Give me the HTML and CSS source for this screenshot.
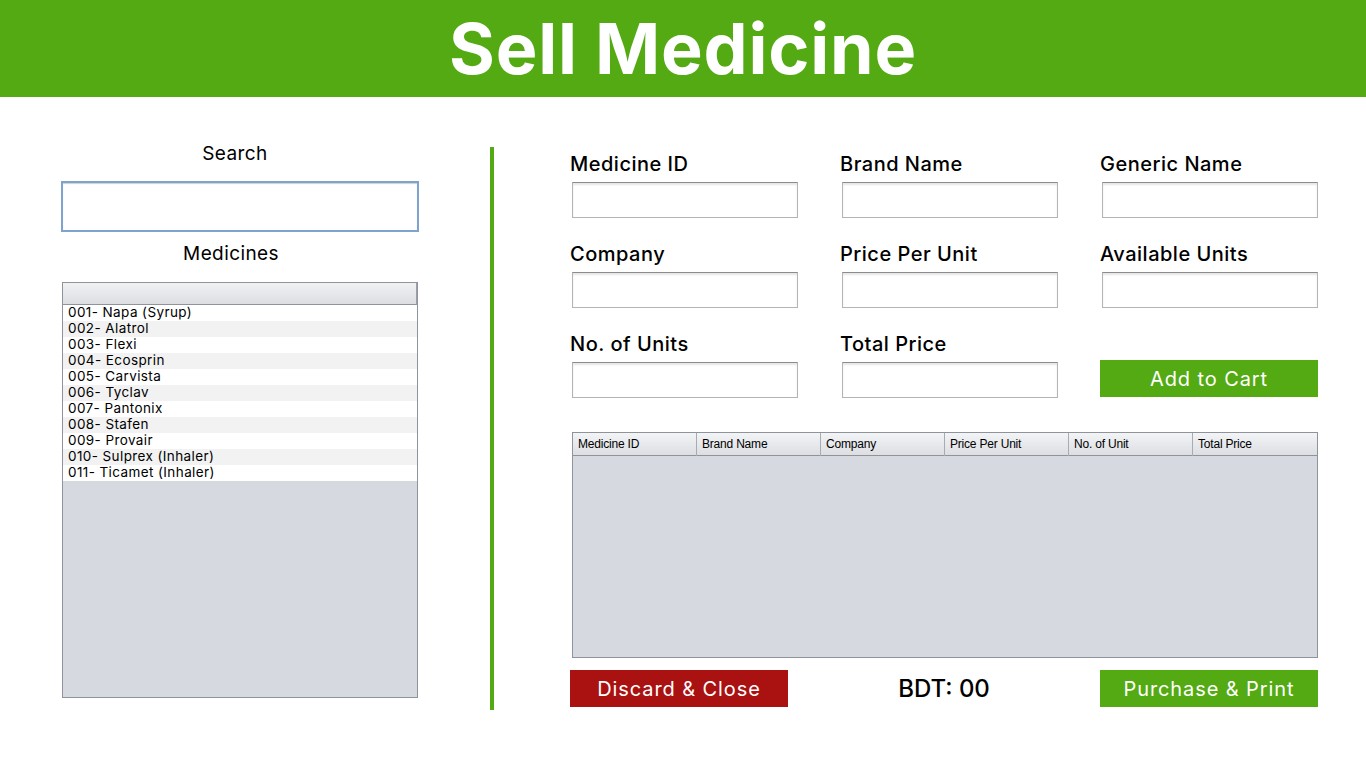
FILE: index.html
```html
<!DOCTYPE html>
<html lang="en">
<head>
    <meta charset="UTF-8">
    <meta name="viewport" content="width=device-width, initial-scale=1.0">
    <title>Sell Medicine</title>
    <link rel="stylesheet" href="styles.css">
</head>
<body>
    <header class="topbar">
        <h1>Sell Medicine</h1>
    </header>

    <main class="page">
        <section class="left-col">
            <div class="side-title search-title">Search</div>
            <input type="text" class="search-box">
            <div class="side-title medicines-title">Medicines</div>
            <div class="med-list">
                <div class="list-head"></div>
                <div class="list-row">001- Napa (Syrup)</div>
                <div class="list-row">002- Alatrol</div>
                <div class="list-row">003- Flexi</div>
                <div class="list-row">004- Ecosprin</div>
                <div class="list-row">005- Carvista</div>
                <div class="list-row">006- Tyclav</div>
                <div class="list-row">007- Pantonix</div>
                <div class="list-row">008- Stafen</div>
                <div class="list-row">009- Provair</div>
                <div class="list-row">010- Sulprex (Inhaler)</div>
                <div class="list-row">011- Ticamet (Inhaler)</div>
            </div>
        </section>

        <div class="divider"></div>

        <section class="right-col">
            <div class="fields">
                <div class="field">
                    <label for="med_id">Medicine ID</label>
                    <input type="text" id="med_id" class="wide">
                </div>
                <div class="field">
                    <label for="brand">Brand Name</label>
                    <input type="text" id="brand">
                </div>
                <div class="field">
                    <label for="generic">Generic Name</label>
                    <input type="text" id="generic">
                </div>

                <div class="field">
                    <label for="company">Company</label>
                    <input type="text" id="company" class="wide">
                </div>
                <div class="field">
                    <label for="ppu">Price Per Unit</label>
                    <input type="text" id="ppu">
                </div>
                <div class="field">
                    <label for="avail">Available Units</label>
                    <input type="text" id="avail">
                </div>

                <div class="field">
                    <label for="units">No. of Units</label>
                    <input type="text" id="units" class="wide">
                </div>
                <div class="field">
                    <label for="total">Total Price</label>
                    <input type="text" id="total">
                </div>
                <div class="field field-btn">
                    <button class="btn green">Add to Cart</button>
                </div>
            </div>

            <div class="cart">
                <div class="cart-head">
                    <div>Medicine ID</div>
                    <div>Brand Name</div>
                    <div>Company</div>
                    <div>Price Per Unit</div>
                    <div>No. of Unit</div>
                    <div>Total Price</div>
                </div>
            </div>

            <div class="bottom-bar">
                <button class="btn red">Discard &amp; Close</button>
                <div class="total-text">BDT: 00</div>
                <button class="btn green">Purchase &amp; Print</button>
            </div>
        </section>
    </main>
</body>
</html>
```

FILE: styles.css
```css
body {
    margin: 0;
    font-family: "Inter", "Open Sans", sans-serif;
    background: #fff;
    color: #000;
}
.topbar {
    height: 97px;
    background: #54aa12;
    display: flex;
    justify-content: center;
    align-items: center;
}
.topbar h1 {
    margin: 0;
    color: #fff;
    font-size: 70px;
    font-weight: 700;
    letter-spacing: 0.8px;
    line-height: 97px;
}
.page {
    display: flex;
    padding: 45px 0 0 61px;
}
.left-col {
    width: 358px;
    display: flex;
    flex-direction: column;
}
.side-title {
    font-size: 19px;
    line-height: 24px;
    text-align: center;
    font-weight: 400;
    letter-spacing: 0.4px;
}
.search-title {
    margin-right: 10px;
}
.search-box {
    margin-top: 15px;
    height: 51px;
    box-sizing: border-box;
    border: 2px solid #7ea3cf;
    outline: none;
    box-shadow: inset 0 1px 1px #d0d0d0;
}
.medicines-title {
    margin-top: 10px;
    margin-right: 18px;
}
.med-list {
    margin: 16px 0 0 1px;
    width: 356px;
    height: 416px;
    box-sizing: border-box;
    border: 1px solid #8e939c;
    background: #d6d9e0;
}
.list-head {
    height: 21px;
    border-bottom: 1px solid #8e939c;
    border-right: 1px solid #9aa0a8;
    background: linear-gradient(#f0f1f3, #dcdee2);
}
.list-row {
    height: 16px;
    line-height: 15px;
    font-size: 13.5px;
    letter-spacing: 0.4px;
    padding-left: 5px;
    background: #fff;
}
.list-row:nth-child(odd) {
    background: #f2f2f2;
}
.divider {
    width: 4px;
    height: 563px;
    margin: 5px 0 0 71px;
    background: #54aa12;
}
.right-col {
    margin-left: 76px;
    width: 748px;
    padding-top: 10px;
}
.fields {
    display: grid;
    grid-template-columns: 270px 260px 218px;
    row-gap: 24px;
}
.field {
    display: flex;
    flex-direction: column;
}
.field label {
    font-size: 20px;
    font-weight: 500;
    line-height: 24px;
    letter-spacing: 0.5px;
    margin-bottom: 6px;
}
.field input {
    margin-left: 2px;
    width: 216px;
    height: 36px;
    box-sizing: border-box;
    border: 1px solid #b4b4b4;
    border-top-color: #8c8c8c;
    box-shadow: inset 0 2px 2px #e6e6e6;
    outline: none;
}
.field input.wide {
    width: 226px;
}
.field-btn {
    justify-content: flex-end;
}
.btn {
    width: 218px;
    height: 37px;
    border: none;
    color: #fff;
    font-family: inherit;
    font-size: 20px;
    letter-spacing: 0.9px;
    cursor: pointer;
}
.green {
    background: #54aa12;
}
.red {
    background: #aa1111;
}
.field-btn .btn {
    margin-bottom: 1px;
}
.cart {
    margin: 34px 0 0 2px;
    width: 746px;
    height: 226px;
    box-sizing: border-box;
    border: 1px solid #8e939c;
    background: #d6d9e0;
}
.cart-head {
    display: grid;
    grid-template-columns: repeat(6, 1fr);
    height: 22px;
    border-bottom: 1px solid #8e939c;
    background: linear-gradient(#f3f4f6, #dcdee2);
}
.cart-head div {
    font-family: "Liberation Sans", Arial, sans-serif;
    font-size: 12px;
    line-height: 23px;
    padding-left: 5px;
    border-right: 1px solid #a7acb4;
    letter-spacing: -0.2px;
}
.cart-head div:last-child {
    border-right: none;
}
.bottom-bar {
    margin-top: 12px;
    display: flex;
    justify-content: space-between;
    align-items: center;
}
.total-text {
    font-size: 24px;
    font-weight: 500;
}
```
